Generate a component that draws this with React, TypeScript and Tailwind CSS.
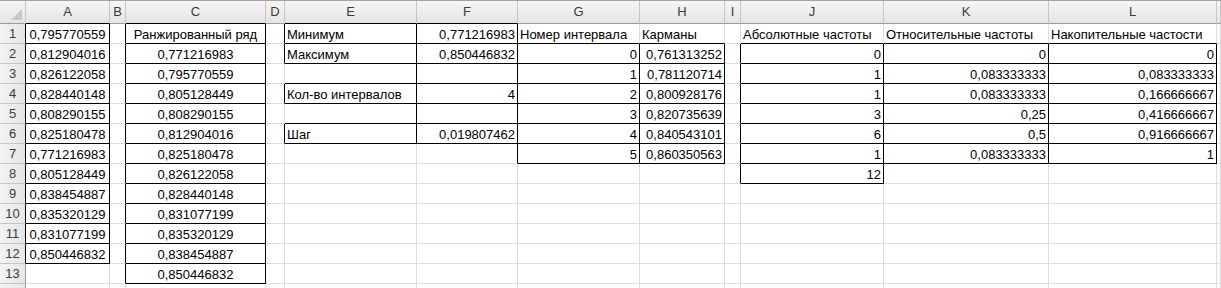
import React from 'react';

type Align = 'l' | 'r' | 'c';
type Cell = { v: string; a: Align };

const cols = ['A', 'B', 'C', 'D', 'E', 'F', 'G', 'H', 'I', 'J', 'K', 'L', 'M'];
const rowCount = 14;

const num = (v: string): Cell => ({ v, a: 'r' });
const txt = (v: string): Cell => ({ v, a: 'l' });
const mid = (v: string): Cell => ({ v, a: 'c' });

const colA = ['0,795770559', '0,812904016', '0,826122058', '0,828440148', '0,808290155', '0,825180478', '0,771216983', '0,805128449', '0,838454887', '0,835320129', '0,831077199', '0,850446832'];
const colC = ['Ранжированный ряд', '0,771216983', '0,795770559', '0,805128449', '0,808290155', '0,812904016', '0,825180478', '0,826122058', '0,828440148', '0,831077199', '0,835320129', '0,838454887', '0,850446832'];
const colH = ['0,761313252', '0,781120714', '0,800928176', '0,820735639', '0,840543101', '0,860350563'];
const colJ = ['0', '1', '1', '3', '6', '1', '12'];
const colK = ['0', '0,083333333', '0,083333333', '0,25', '0,5', '0,083333333'];
const colL = ['0', '0,083333333', '0,166666667', '0,416666667', '0,916666667', '1'];

const data: Record<string, Cell> = {};
colA.forEach((v, i) => (data[`A${i + 1}`] = mid(v)));
colC.forEach((v, i) => (data[`C${i + 1}`] = mid(v)));
data.E1 = txt('Минимум');
data.F1 = num('0,771216983');
data.E2 = txt('Максимум');
data.F2 = num('0,850446832');
data.E4 = txt('Кол-во интервалов');
data.F4 = num('4');
data.E6 = txt('Шаг');
data.F6 = num('0,019807462');
data.G1 = txt('Номер интервала');
data.H1 = txt('Карманы');
[0, 1, 2, 3, 4, 5].forEach((n) => (data[`G${n + 2}`] = num(String(n))));
colH.forEach((v, i) => (data[`H${i + 2}`] = num(v)));
data.J1 = txt('Абсолютные частоты');
data.K1 = txt('Относительные частоты');
data.L1 = txt('Накопительные частости');
colJ.forEach((v, i) => (data[`J${i + 2}`] = num(v)));
colK.forEach((v, i) => (data[`K${i + 2}`] = num(v)));
colL.forEach((v, i) => (data[`L${i + 2}`] = num(v)));

// cells drawn with a thin black box
const boxed = new Set<string>();
const range = (c: string, from: number, to: number) => {
  for (let r = from; r <= to; r++) boxed.add(`${c}${r}`);
};
range('A', 1, 12);
range('C', 1, 13);
range('E', 1, 2);
range('E', 4, 4);
range('E', 6, 6);
range('F', 1, 6);
range('G', 2, 7);
range('H', 2, 7);
range('J', 2, 8);
range('K', 2, 7);
range('L', 2, 7);

const isBoxed = (c: number, r: number) => c >= 0 && c < cols.length && r >= 1 && boxed.has(`${cols[c]}${r}`);

const font = { fontFamily: '"Liberation Sans", Arial, sans-serif' };

const Corner = () => (
  <div className="relative border-r border-b border-r-[#c6c6c6] border-b-[#9b9b9b] bg-gradient-to-b from-[#f6f6f6] to-[#e4e4e4]">
    <svg className="absolute right-[3px] bottom-[3px]" width="11" height="11" viewBox="0 0 11 11">
      <polygon points="11,0 11,11 0,11" fill="#c9c9c9" />
    </svg>
  </div>
);

export default function App() {
  const cells: React.ReactNode[] = [];

  cells.push(<Corner key="corner" />);
  cols.forEach((c, ci) => {
    cells.push(
      <div
        key={`h-${c}`}
        className={`flex items-center justify-center overflow-hidden border-r border-b border-r-[#c6c6c6] bg-gradient-to-b from-[#f6f6f6] to-[#e4e4e4] text-[13px] text-[#3b3b3b] ${isBoxed(ci, 1) ? 'border-b-black' : 'border-b-[#9b9b9b]'}`}
      >
        {c !== 'M' && c}
      </div>
    );
  });

  for (let r = 1; r <= rowCount; r++) {
    cells.push(
      <div
        key={`r-${r}`}
        className={`flex items-center justify-center border-r border-b border-b-[#c6c6c6] bg-gradient-to-r from-[#f3f3f3] to-[#e6e6e6] text-[13px] text-[#3b3b3b] ${isBoxed(0, r) ? 'border-r-black' : 'border-r-[#9b9b9b]'}`}
      >
        {r < rowCount && r}
      </div>
    );
    cols.forEach((c, ci) => {
      const cell = data[`${c}${r}`];
      const right = isBoxed(ci, r) || isBoxed(ci + 1, r);
      const bottom = isBoxed(ci, r) || isBoxed(ci, r + 1);
      const align = !cell ? '' : cell.a === 'r' ? 'justify-end pr-[2px]' : cell.a === 'c' ? 'justify-center' : 'justify-start pl-[2px]';
      cells.push(
        <div
          key={`${c}${r}`}
          className={`relative flex items-center whitespace-nowrap bg-white border-r border-b text-[13px] leading-[19px] text-black ${align} ${right ? 'border-r-black' : 'border-r-[#dadcdd]'} ${bottom ? 'border-b-black' : 'border-b-[#dadcdd]'}`}
        >
          {cell && <span className="pt-[1px]">{cell.v}</span>}
        </div>
      );
    });
  }

  return (
    <div className="h-[288px] w-[1221px] overflow-hidden bg-white" style={font}>
      <div className="grid grid-cols-[26px_84px_16px_140px_19px_132px_101px_122px_85px_16px_143px_165px_168px_1fr] grid-rows-[23px_repeat(14,20px)] border-t border-t-[#a3a3a3]">
        {cells}
      </div>
    </div>
  );
}
